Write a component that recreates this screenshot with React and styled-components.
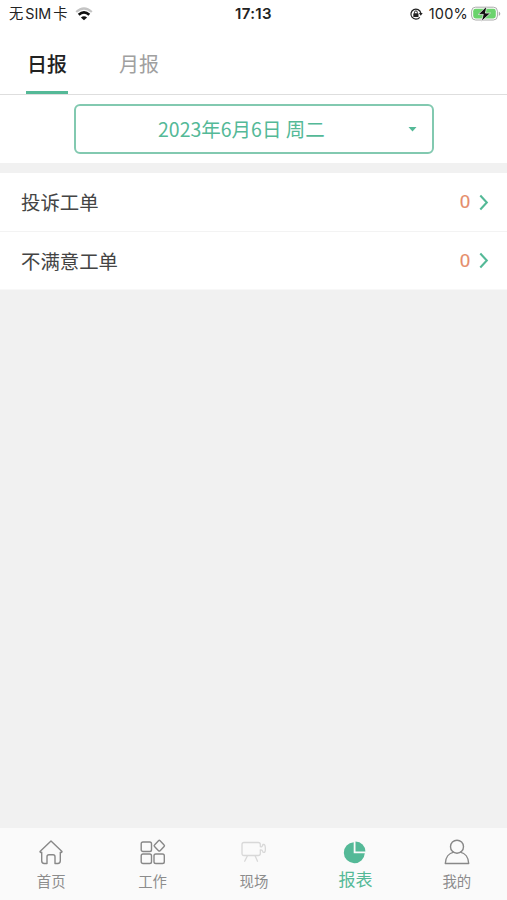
import React from 'react';
import styled, { createGlobalStyle } from 'styled-components';

const green = '#54b997';

const GlobalStyle = createGlobalStyle`
  * { box-sizing: border-box; }
  body {
    margin: 0;
    background: #f1f1f1;
    font-family: 'Noto Sans CJK SC', sans-serif;
  }
`;

const Screen = styled.div`
  width: 507px;
  height: 900px;
  display: flex;
  flex-direction: column;
  background: #f1f1f1;
  overflow: hidden;
`;

const StatusBar = styled.header`
  height: 28px;
  flex: none;
  display: grid;
  grid-template-columns: 1fr auto 1fr;
  align-items: center;
  padding: 0 6px 0 9px;
  background: #fff;
  color: #222;
  font-family: Inter, 'Noto Sans CJK SC', sans-serif;
  font-size: 14.5px;
  line-height: 28px;
`;

const StatusGroup = styled.div`
  display: flex;
  align-items: center;
  justify-content: ${(p) => (p.$end ? 'flex-end' : 'flex-start')};
  white-space: nowrap;
  svg { display: block; flex: none; }
`;

const Carrier = styled.span`
  display: flex;
  gap: 2px;
  margin-right: 7px;
  font-size: 14.3px;
`;

const Clock = styled.span`
  margin-right: 3px;
  font-size: 15px;
  font-weight: 600;
  letter-spacing: 0.35px;
`;

const Percent = styled.span`
  margin: 0 3px 0 6px;
  letter-spacing: 0.2px;
`;

const Tabs = styled.nav`
  height: 67px;
  flex: none;
  display: flex;
  gap: 50px;
  padding-left: 26px;
  background: #fff;
  border-bottom: 1px solid #dedede;
`;

const Tab = styled.div`
  width: 42px;
  height: 66px;
  display: flex;
  justify-content: center;
  padding-top: 21px;
  font-size: 20px;
  line-height: 30px;
  white-space: nowrap;
  font-weight: ${(p) => (p.$active ? 500 : 400)};
  color: ${(p) => (p.$active ? '#222' : '#a0a0a0')};
  border-bottom: 3px solid ${(p) => (p.$active ? green : 'transparent')};
`;

const DateSection = styled.section`
  height: 68px;
  flex: none;
  padding: 9px 73px 0 74px;
  background: #fff;
`;

const DatePicker = styled.div`
  height: 50px;
  display: flex;
  align-items: center;
  padding: 0 15px 0 82px;
  border: 2px solid #82c9b0;
  border-radius: 6px;
  color: ${green};
  font-size: 19.5px;
  line-height: 30px;
  white-space: nowrap;
  svg { display: block; margin-left: auto; }
`;

const List = styled.main`
  flex: 1;
  margin-top: 10px;
`;

const Row = styled.div`
  height: ${(p) => (p.$last ? 58 : 59)}px;
  display: flex;
  align-items: center;
  padding: 0 18px 0 21px;
  background: #fff;
  border-bottom: 1px solid ${(p) => (p.$last ? '#f8f8f8' : '#f3f3f3')};
  color: #444;
  font-size: 19.4px;
  line-height: 30px;
`;

const Count = styled.span`
  margin-left: auto;
  margin-right: 9px;
  color: #e58b68;
  font-family: 'Liberation Sans', sans-serif;
  font-size: 18px;
  -webkit-text-stroke: 0.2px currentColor;
`;

const BottomBar = styled.nav`
  height: 72px;
  flex: none;
  display: grid;
  grid-template-columns: repeat(5, 1fr);
  background: #fafafa;
`;

const NavItem = styled.div`
  display: flex;
  flex-direction: column;
  align-items: center;
  padding-top: 11px;
  padding-left: 1px;
  color: ${(p) => (p.$active ? green : '#8c8c8c')};
  font-size: ${(p) => (p.$active ? 17 : 14.4)}px;
  line-height: ${(p) => (p.$active ? 24 : 28)}px;
  svg { display: block; flex: none; }
`;

const icons = {
  home: (
    <svg width="26" height="28" viewBox="0 0 26 28" fill="none" stroke="#888" strokeWidth="1.4" strokeLinejoin="round" strokeLinecap="round">
      <path d="M2 12.500 13 2l11 10.500c.2 1-.7 1.200-1.700.8v8.500c0 1.800-.8 2.700-2.500 2.700H17v-6.700c0-1.500-.5-2-2-2h-4c-1.500 0-2 .5-2 2v6.700H6.200c-1.700 0-2.500-.9-2.500-2.700v-8.500c-1 .4-1.900.2-1.700-.8Z" />
    </svg>
  ),
  work: (
    <svg width="26" height="28" viewBox="0 0 26 28" fill="none" stroke="#888" strokeWidth="1.4" strokeLinejoin="round">
      <rect x="1.200" y="3" width="10.300" height="9.500" rx="1.800" />
      <rect x="1.200" y="15" width="10.300" height="9.500" rx="1.800" />
      <rect x="14" y="15" width="10.300" height="9.500" rx="1.800" />
      <path d="m18.500 1.700-4 4.200q-.8.800 0 1.600l4 4.200q.8.700 1.600 0l4-4.200q.8-.8 0-1.600l-4-4.200q-.8-.7-1.600 0Z" />
    </svg>
  ),
  site: (
    <svg width="26" height="28" viewBox="0 0 26 28" fill="none" stroke="#d8d8d8" strokeWidth="1.300" strokeLinejoin="round" strokeLinecap="round">
      <path d="M3 3.500h14.300q2 0 2 2v2.200q2 .5 2.600-2.200h1.100q1 0 1.300 3 .3 3.500-.5 4.500-.3.400-1.900.2-.6-2.700-2.600-2.200v3.500q0 2-2 2H3q-2 0-2-2v-9q0-2 2-2Z" />
      <path d="m6.300 17-2.600 5.200M14.200 17l2.300 5.200" />
    </svg>
  ),
  report: (
    <svg width="26" height="28" viewBox="0 0 26 28" fill={green}>
      <path d="M11.700 3.200v11.100h11.100A10.500 10.500 0 1 1 11.700 3.200Z" />
      <path d="M13.500 2.600a9.800 9.800 0 0 1 9.900 9.900h-9.900Z" />
    </svg>
  ),
  me: (
    <svg width="26" height="28" viewBox="0 0 26 28" fill="none" stroke="#888" strokeWidth="1.400" strokeLinejoin="round">
      <circle cx="13" cy="7.700" r="6.500" />
      <path d="M9.800 13.100C4.800 14 1.500 18.500 1.300 24.500h23.400c-.2-6-3.500-10.500-8.500-11.400" />
    </svg>
  ),
};

const navigation = [
  ['首页', 'home'],
  ['工作', 'work'],
  ['现场', 'site'],
  ['报表', 'report'],
  ['我的', 'me'],
];

const rows = ['投诉工单', '不满意工单'];

function WifiIcon() {
  return (
    <svg width="18" height="14" viewBox="0 0 18 14" fill="none">
      <path d="M1.200 5Q9-2 16.800 5" stroke="#c4c4c4" strokeWidth="2.200" />
      <path d="M3.700 7.800Q9 3.100 14.300 7.800" stroke="#111" strokeWidth="2.700" />
      <path d="M5.900 10.500q3.100-2.500 6.200 0l-3.100 2.800Z" fill="#111" />
    </svg>
  );
}

function LockIcon() {
  return (
    <svg width="14" height="14" viewBox="0 0 14 14" fill="none" stroke="#222" strokeWidth="1.200">
      <path d="M10.800 10.300A5 5 0 1 1 11.800 6" />
      <path d="m9.900 6 3.800 0-1.900 2.800Z" fill="#222" stroke="none" />
      <rect x="4.300" y="6.300" width="5.200" height="3.700" rx=".6" fill="#222" stroke="none" />
      <path d="M5.500 6.500V5.300a1.400 1.400 0 0 1 2.800 0v1.200" strokeWidth="1" />
    </svg>
  );
}

function BatteryIcon() {
  return (
    <svg width="30" height="16" viewBox="0 0 30 16">
      <rect x=".6" y="1.200" width="25.800" height="12.800" rx="4" fill="#fff" stroke="#aaa" />
      <rect x="2.200" y="2.800" width="22.600" height="9.600" rx="2.400" fill="#6bd36d" />
      <path d="M27.800 5.500q3 2.200 0 4.500Z" fill="#aaa" />
      <path d="M15.800.1 7.300 8.400h5l-1.900 7 9.100-8.300h-5.100Z" fill="#111" stroke="#fff" strokeWidth=".7" />
    </svg>
  );
}

export default function App() {
  return (
    <>
      <GlobalStyle />
      <Screen>
        <StatusBar>
          <StatusGroup>
            <Carrier><span>无</span><span>SIM</span><span>卡</span></Carrier>
            <WifiIcon />
          </StatusGroup>
          <Clock>17:13</Clock>
          <StatusGroup $end>
            <LockIcon />
            <Percent>100%</Percent>
            <BatteryIcon />
          </StatusGroup>
        </StatusBar>
        <Tabs>
          <Tab $active>日报</Tab>
          <Tab>月报</Tab>
        </Tabs>
        <DateSection>
          <DatePicker>
            <span>2023年6月6日 周二</span>
            <svg width="9" height="5" viewBox="0 0 9 5"><path d="M.5 0h8l-4 4.500Z" fill={green} /></svg>
          </DatePicker>
        </DateSection>
        <List>
          {rows.map((label, index) => (
            <Row key={label} $last={index === rows.length - 1}>
              <span>{label}</span>
              <Count>0</Count>
              <svg width="10" height="17" viewBox="0 0 10 17" fill="none" stroke={green} strokeWidth="2.100">
                <path d="m1.300 1.500 6.500 7-6.500 7" />
              </svg>
            </Row>
          ))}
        </List>
        <BottomBar>
          {navigation.map(([label, icon]) => (
            <NavItem key={icon} $active={icon === 'report'}>
              {icons[icon]}
              <span>{label}</span>
            </NavItem>
          ))}
        </BottomBar>
      </Screen>
    </>
  );
}
